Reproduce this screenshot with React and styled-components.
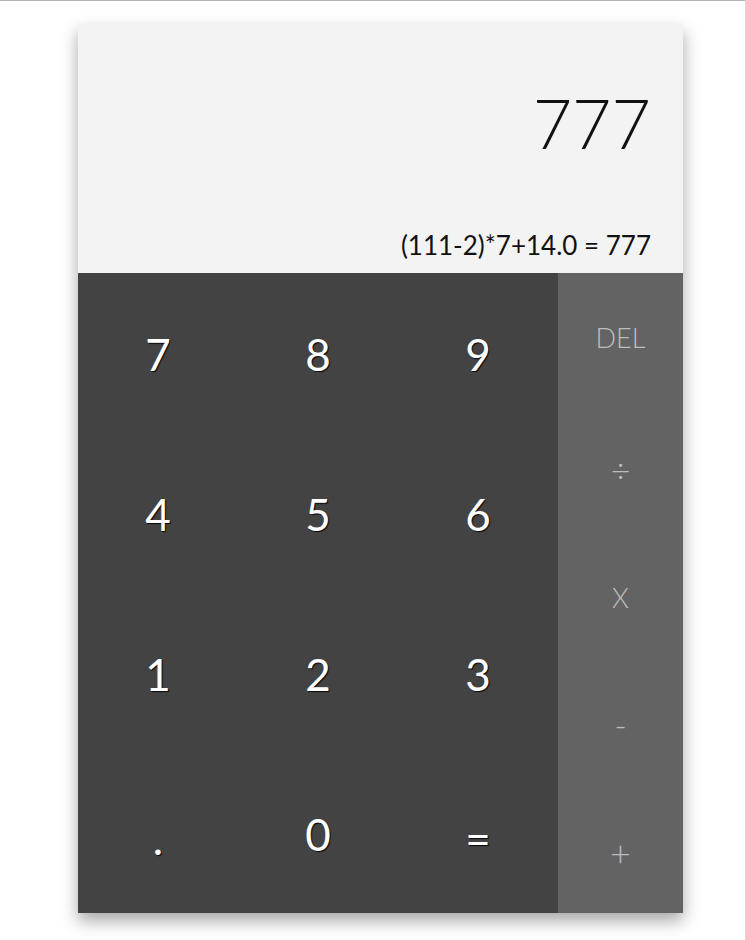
import React from "react";
import styled, { createGlobalStyle } from "styled-components";

const Global = createGlobalStyle`
  html, body { margin: 0; padding: 0; background: #fff; }
  body { border-top: 1px solid #b4b4b4; font-family: "Lato", "Open Sans", sans-serif; }
`;

const Page = styled.div`
  padding: 23px 0 40px 78px;
`;

const Card = styled.div`
  width: 605px;
  display: flex;
  flex-direction: column;
  box-shadow: 0 8px 16px rgba(0, 0, 0, 0.35);
`;

const Display = styled.div`
  height: 249px;
  background: #f3f3f3;
  display: flex;
  flex-direction: column;
  align-items: flex-end;
  justify-content: space-between;
  padding: 0 32px 12px 0;
  box-sizing: border-box;
  color: #111;
`;

const Result = styled.div`
  font-size: 68px;
  font-weight: 300;
  line-height: 1;
  margin-top: 65px;
`;

const Expression = styled.div`
  font-size: 26px;
  font-weight: 400;
  line-height: 1.2;
`;

const Pad = styled.div`
  display: flex;
  height: 640px;
`;

const Digits = styled.div`
  width: 480px;
  background: #434343;
  display: grid;
  grid-template-columns: repeat(3, 1fr);
  grid-template-rows: repeat(4, 1fr);
`;

const DigitKey = styled.div`
  display: flex;
  align-items: center;
  justify-content: center;
  color: #fff;
  font-size: 44px;
  font-weight: 400;
  text-shadow: 1px 1px 1px rgba(0, 0, 0, 0.9);
  padding-top: ${(p) => (p.$low ? "10px" : "2px")};
`;

const Ops = styled.div`
  flex: 1;
  background: #636363;
  display: grid;
  grid-template-rows: repeat(5, 1fr);
`;

const OpKey = styled.div`
  display: flex;
  align-items: center;
  justify-content: center;
  color: #bdbdbd;
  font-size: ${(p) => p.$size || 28}px;
  font-weight: 300;
  padding-top: ${(p) => p.$shift || 0}px;
`;

const digits = ["7", "8", "9", "4", "5", "6", "1", "2", "3", ".", "0", "="];

export default function App() {
  return (
    <>
      <Global />
      <Page>
        <Card>
          <Display>
            <Result>777</Result>
            <Expression>(111-2)*7+14.0 = 777</Expression>
          </Display>
          <Pad>
            <Digits>
              {digits.map((d) => (
                <DigitKey key={d} $low={d === "." || d === "="}>
                  {d}
                </DigitKey>
              ))}
            </Digits>
            <Ops>
              <OpKey $size={27}>DEL</OpKey>
              <OpKey $size={34} $shift={8}>÷</OpKey>
              <OpKey $size={27} $shift={8}>X</OpKey>
              <OpKey $size={34} $shift={6}>-</OpKey>
              <OpKey $size={36} $shift={8}>+</OpKey>
            </Ops>
          </Pad>
        </Card>
      </Page>
    </>
  );
}
